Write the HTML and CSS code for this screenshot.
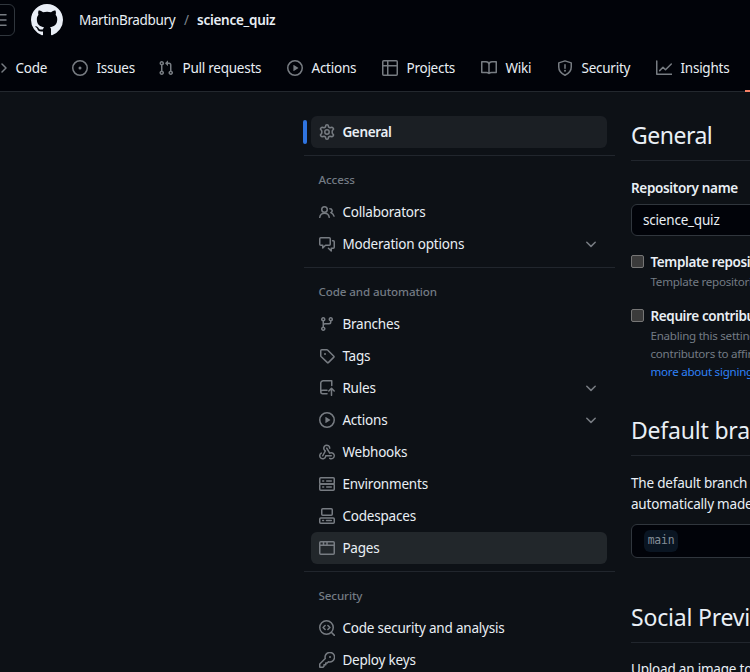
FILE: index.html
```html
<!DOCTYPE html>
<html lang="en">
<head>
<meta charset="utf-8">
<title>Settings · MartinBradbury/science_quiz</title>
<link rel="stylesheet" href="styles.css">
</head>
<body>
<svg class="sprite" aria-hidden="true">
  <symbol id="chevron" viewBox="0 0 16 16"><path class="line" d="M3.8 6.3 8 10.4l4.2-4.1"/></symbol>
  <symbol id="play" viewBox="0 0 16 16"><circle class="line" cx="8" cy="8" r="7.25"/><path d="M6.4 5.2v5.6c0 .2.2.3.4.2l4.4-2.8c.2-.1.2-.3 0-.4L6.8 5c-.2-.1-.4 0-.4.2Z"/></symbol>
</svg>
<header class="header">
  <div class="topbar">
    <div class="menu"><svg class="icon" viewBox="0 0 16 16"><path class="line" d="M1 2.75h14M1 8h14M1 13.25h14"/></svg></div>
    <svg class="logo" viewBox="0 0 16 16"><path d="M8 0c4.42 0 8 3.58 8 8a8.013 8.013 0 0 1-5.45 7.59c-.4.08-.55-.17-.55-.38 0-.27.01-1.13.01-2.2 0-.75-.25-1.23-.54-1.48 1.78-.2 3.65-.88 3.65-3.95 0-.88-.31-1.59-.82-2.15.08-.2.36-1.02-.08-2.12 0 0-.67-.22-2.2.82-.64-.18-1.32-.27-2-.27-.68 0-1.36.09-2 .27-1.53-1.03-2.2-.82-2.2-.82-.44 1.1-.16 1.92-.08 2.12-.51.56-.82 1.28-.82 2.15 0 3.06 1.86 3.75 3.64 3.95-.23.2-.44.55-.51 1.07-.46.21-1.61.55-2.33-.66-.15-.24-.6-.83-1.23-.82-.67.01-.27.38.01.53.34.19.73.9.82 1.13.16.45.68 1.31 2.69.94 0 .67.01 1.3.01 1.49 0 .21-.15.45-.55.38A7.995 7.995 0 0 1 0 8c0-4.42 3.58-8 8-8Z"/></svg>
    <span class="owner">MartinBradbury</span><span class="slash">/</span><span class="repo">science_quiz</span>
  </div>
  <nav class="tabs">
    <a class="tab"><svg class="icon" viewBox="0 0 16 16"><path class="line" d="M5 4 1 8l4 4M11 4l4 4-4 4"/></svg><span>Code</span></a>
    <a class="tab"><svg class="icon" viewBox="0 0 16 16"><circle class="line" cx="8" cy="8" r="7.25"/><circle cx="8" cy="8" r="1.5"/></svg><span>Issues</span></a>
    <a class="tab"><svg class="icon" viewBox="0 0 16 16"><path d="M1.5 3.25a2.25 2.25 0 1 1 3 2.122v5.256a2.251 2.251 0 1 1-1.5 0V5.372A2.25 2.25 0 0 1 1.5 3.25Zm5.677-.177L9.573.677A.25.25 0 0 1 10 .854V2.5h1A2.5 2.5 0 0 1 13.5 5v5.628a2.251 2.251 0 1 1-1.5 0V5a1 1 0 0 0-1-1h-1v1.646a.25.25 0 0 1-.427.177L7.177 3.427a.25.25 0 0 1 0-.354ZM3.75 2.5a.75.75 0 1 0 0 1.5.75.75 0 0 0 0-1.5Zm0 9.5a.75.75 0 1 0 0 1.5.75.75 0 0 0 0-1.5Zm8.25.75a.75.75 0 1 0 1.5 0 .75.75 0 0 0-1.5 0Z"/></svg><span>Pull requests</span></a>
    <a class="tab"><svg class="icon"><use href="#play"/></svg><span>Actions</span></a>
    <a class="tab"><svg class="icon" viewBox="0 0 16 16"><rect class="line" x=".75" y=".75" width="14.5" height="14.5" rx="1"/><path class="line" d="M5.75.75v14.5M.75 5.75h14.5"/></svg><span>Projects</span></a>
    <a class="tab"><svg class="icon" viewBox="0 0 16 16"><path class="line" d="M.75 1.75H5A3 3 0 0 1 8 4.5v9c-.7-.7-1.4-1-2.5-1H.75Zm14.5 0H11A3 3 0 0 0 8 4.5v9c.7-.7 1.4-1 2.5-1h4.75Z"/></svg><span>Wiki</span></a>
    <a class="tab"><svg class="icon" viewBox="0 0 16 16"><path class="line" d="M8 .9 14.25 2.9V7c0 3.6-2 6.4-6.25 8.2C3.75 13.4 1.75 10.6 1.75 7V2.9ZM8 4.7v3.6"/><circle cx="8" cy="10.7" r="1"/></svg><span>Security</span></a>
    <a class="tab"><svg class="icon" viewBox="0 0 16 16"><path class="line" d="M.75 1v13.25H16M3.7 10.6 7 7.3l2.5 2.5 5.8-5.8"/></svg><span>Insights</span></a>
    <a class="tab current"></a>
  </nav>
</header>
<div class="page">
  <aside class="sidebar">
    <a class="item selected"><svg class="icon" viewBox="0 0 16 16"><path class="line" d="M6.9 1.2Q8 .5 9.1 1.2L9.6 3 11 3.8l1.9-.5q1.2.3 1.7 1.7L13.2 6.9v2.2l1.4 1.9q-.4 1.3-1.7 1.7l-1.9-.5-1.4.8-.5 1.8q-1.1.7-2.2 0L6.4 13 5 12.2l-1.9.5Q1.8 12.3 1.4 11l1.4-1.9V6.9L1.4 5q.5-1.4 1.7-1.7l1.9.5L6.4 3Z"/><circle class="line" cx="8" cy="8" r="2.2"/></svg><span>General</span></a>
    <hr>
    <h3>Access</h3>
    <a class="item"><svg class="icon" viewBox="0 0 16 16"><circle class="line" cx="5.5" cy="5.5" r="2.75"/><path class="line" d="M.75 13.3a4.8 4.8 0 0 1 9.5 0M10.9 4.7c2.6 0 3 3.2.9 3.9 1.6.6 2.7 1.7 3.2 3.5"/></svg><span>Collaborators</span></a>
    <a class="item"><svg class="icon" viewBox="0 0 16 16"><path class="line" d="M1.75 1.75h8.5q1 0 1 1v5.5q0 1-1 1H6.5L3.75 12V9.25h-2q-1 0-1-1v-5.5q0-1 1-1ZM13.5 4.75h.75q1 0 1 1v5.5q0 1-1 1h-2v2.75L9.4 12.25"/></svg><span>Moderation options</span><svg class="icon arrow"><use href="#chevron"/></svg></a>
    <hr>
    <h3>Code and automation</h3>
    <a class="item"><svg class="icon" viewBox="0 0 16 16"><path d="M9.5 3.25a2.25 2.25 0 1 1 3 2.122V6A2.5 2.5 0 0 1 10 8.5H6a1 1 0 0 0-1 1v1.128a2.251 2.251 0 1 1-1.5 0V5.372a2.25 2.25 0 1 1 1.5 0v1.836A2.493 2.493 0 0 1 6 7h4a1 1 0 0 0 1-1v-.628A2.25 2.25 0 0 1 9.5 3.25Zm-6 0a.75.75 0 1 0 1.5 0 .75.75 0 0 0-1.5 0Zm8.25-.75a.75.75 0 1 0 0 1.5.75.75 0 0 0 0-1.5ZM4.25 12a.75.75 0 1 0 0 1.5.75.75 0 0 0 0-1.5Z"/></svg><span>Branches</span></a>
    <a class="item"><svg class="icon" viewBox="0 0 16 16"><path class="line" d="M2.75 1.75h5.1q.4 0 .7.3l6.3 6.2q.4.5 0 .9l-5.5 5.5q-.5.4-.9 0L2.05 8.55q-.3-.3-.3-.7v-5.1q0-1 1-1Z"/><circle cx="6" cy="6" r="1"/></svg><span>Tags</span></a>
    <a class="item"><svg class="icon" viewBox="0 0 16 16"><path class="line" d="M12.75 5.5V.75h-8.5a2.5 2.5 0 0 0-2.5 2.5v8.5a2 2 0 0 0 2 2H8M1.75 11.5q.3-1.25 2-1.25H8M12.5 15.3V8.6M9.8 11l2.7-2.7 2.7 2.7"/></svg><span>Rules</span><svg class="icon arrow"><use href="#chevron"/></svg></a>
    <a class="item"><svg class="icon"><use href="#play"/></svg><span>Actions</span><svg class="icon arrow"><use href="#chevron"/></svg></a>
    <a class="item"><svg class="icon" viewBox="0 0 16 16"><path d="M5.5 4.25a2.25 2.25 0 0 1 4.5 0 .75.75 0 0 0 1.5 0 3.75 3.75 0 1 0-6.14 2.889l-2.272 4.258a.75.75 0 0 0 1.324.706L7 7.25a.75.75 0 0 0-.309-1.015A2.25 2.25 0 0 1 5.5 4.25Z"/><path d="M7.364 3.607a.75.75 0 0 1 1.03.257l2.608 4.349a3.75 3.75 0 1 1-.628 6.785.75.75 0 0 1 .752-1.299 2.25 2.25 0 1 0-.033-3.88.75.75 0 0 1-1.03-.256L7.107 4.636a.75.75 0 0 1 .257-1.03Z"/><path d="M2.9 8.776A.75.75 0 0 1 2.625 9.8 2.25 2.25 0 1 0 6 11.75a.75.75 0 0 1 .75-.751h5.5a.75.75 0 0 1 0 1.5H7.425a3.751 3.751 0 1 1-5.55-3.998.75.75 0 0 1 1.024.274Z"/></svg><span>Webhooks</span></a>
    <a class="item"><svg class="icon" viewBox="0 0 16 16"><rect class="line" x=".75" y="1.75" width="14.5" height="6.25" rx="1"/><rect class="line" x=".75" y="8" width="14.5" height="6.25" rx="1"/><path class="line" d="M3.7 5h1M7.7 5h4.6M3.7 11h1M7.7 11h4.6"/></svg><span>Environments</span></a>
    <a class="item"><svg class="icon" viewBox="0 0 16 16"><rect class="line" x="2.75" y=".75" width="10.5" height="6.5" rx="1"/><rect class="line" x=".75" y="10" width="14.5" height="5.25" rx="1"/><path class="line" d="M3.7 12.6h.8M7.5 12.6h4.8"/></svg><span>Codespaces</span></a>
    <a class="item hovered"><svg class="icon" viewBox="0 0 16 16"><rect class="line" x=".75" y="1.75" width="14.5" height="12.5" rx="1"/><path class="line" d="M.75 5.25h14.5M4.5 2v3M8 2v3"/></svg><span>Pages</span></a>
    <hr>
    <h3>Security</h3>
    <a class="item"><svg class="icon" viewBox="0 0 16 16"><circle class="line" cx="7.5" cy="7.5" r="6.75"/><path class="line" d="m12.3 12.3 3.1 3.1M6.1 5.5 4.1 7.5l2 2M8.9 5.5l2 2-2 2"/></svg><span>Code security and analysis</span></a>
    <a class="item"><svg class="icon" viewBox="0 0 16 16"><path class="line" d="M6.25 6.5A4.75 4.75 0 1 1 9.5 9.75L8.2 11H6.75v1.75H5v1.5l-1 1H1q-.25 0-.25-.25v-3Z"/><circle cx="11" cy="5" r="1"/></svg><span>Deploy keys</span></a>
  </aside>
  <main class="content">
    <h2 class="h-general">General</h2>
    <label class="field-name">Repository name</label>
    <div class="input">science_quiz</div>
    <div class="check template"><i class="box"></i><div><b>Template repository</b><p>Template repositories let users generate new repositories</p></div></div>
    <div class="check signoff"><i class="box"></i><div><b>Require contributors to sign off on web-based commits</b><p>Enabling this setting will require<br>contributors to affirm their commits<br><a>more about signing off on commits</a></p></div></div>
    <h2 class="h-branch">Default branch</h2>
    <p class="copy">The default branch is considered<br>automatically made against</p>
    <div class="branch-box"><code>main</code></div>
    <h2 class="h-social">Social Preview</h2>
    <p class="copy upload">Upload an image to customize</p>
  </main>
</div>
</body>
</html>
```

FILE: styles.css
```css
* { box-sizing: border-box; }
html, body { margin: 0; height: 672px; overflow: hidden; }
body {
  background: #0d1116;
  color: #e9eff5;
  font: 13.5px/20px "Noto Sans", "Open Sans", sans-serif;
  letter-spacing: -0.2px;
  white-space: nowrap;
}
.sprite { display: none; }
.icon { width: 16px; height: 16px; flex: none; fill: currentColor; color: #777c82; }
.line { fill: none; stroke: currentColor; stroke-width: 1.5; stroke-linecap: round; stroke-linejoin: round; }

.header { height: 92px; background: #010309; border-bottom: 1px solid #23282e; }
.topbar { display: flex; align-items: center; height: 40px; }
.menu { width: 32px; height: 32px; margin-left: -17px; padding: 7px; border: 1px solid #30363d; border-radius: 6px; }
.logo { width: 32px; height: 32px; margin: 0 16px; fill: #e9eef6; }
.owner { width: 105px; letter-spacing: -0.35px; }
.slash { width: 13px; color: #7d8590; }
.repo { font-weight: 600; letter-spacing: -0.27px; }
.tabs {
  display: grid;
  grid-template-columns: 81px 86px 129px 95px 99px 76px 99px 97px 90px;
  height: 52px;
  margin: 0 0 0 -9px;
  padding-top: 3px;
}
.tab { display: flex; align-items: center; gap: 8.5px; height: 52px; padding-bottom: 3px; letter-spacing: -0.25px; }
.current { height: 49px; margin-left: -8px; border-bottom: 2px solid #f78166; }

.page { display: flex; height: 580px; padding-left: 304px; overflow: hidden; }
.sidebar { width: 311px; flex: none; padding-top: 24px; }
.item { display: flex; align-items: center; gap: 7.4px; position: relative; width: 296px; height: 32px; margin-left: 7px; padding: 0 8px; border-radius: 6px; }
.arrow { margin-left: auto; }
.selected { background: #1b1f24; font-weight: 600; letter-spacing: -0.35px; }
.selected::before { content: ""; position: absolute; left: -8px; top: 4px; width: 4px; height: 24px; border-radius: 6px; background: #2f74e0; }
.hovered { background: #22272b; }
.sidebar hr { height: 1px; margin: 7px 0 8px; border: 0; background: #21262d; }
.sidebar h3 { height: 32px; margin: 0 0 0 14.5px; color: #737b84; font-size: 11.6px; font-weight: 500; line-height: 32px; letter-spacing: -0.1px; }

.content { width: 500px; margin-left: 16px; flex: none; }
h2 { height: 45px; margin: 24px 0 0; border-bottom: 1px solid #21262d; font-size: 23px; font-weight: 400; line-height: 38px; letter-spacing: -0.2px; }
.h-general { letter-spacing: -0.5px; }
.field-name { display: block; margin-top: 17px; font-weight: 600; letter-spacing: -0.33px; }
.input { height: 32px; margin-top: 6px; padding: 0 11px; border: 1px solid #30363d; border-radius: 6px; background: #010309; line-height: 31px; }
.check { display: flex; gap: 6.5px; }
.check b { display: block; height: 20px; font-weight: 600; letter-spacing: -0.38px; }
.check p { margin: 1px 0 0; color: #737b84; font-size: 11.6px; line-height: 18px; letter-spacing: -0.26px; }
.check a { color: #2f81f7; }
.template { margin-top: 16px; }
.signoff { margin-top: 15px; }
.box { width: 13px; height: 13px; margin-top: 3px; border: 1px solid #767676; border-radius: 2px; background: #3b3b3b; }
.h-branch { margin-top: 30px; }
.copy { margin: 17px 0 0; line-height: 21px; }
.branch-box { height: 34px; margin-top: 9px; padding: 5px 12px; border: 1px solid #30363d; border-radius: 6px; background: #010309; }
code { display: block; width: 34px; height: 22px; border-radius: 6px; background: #0a1522; color: #848d97; font: 11.4px/21px "DejaVu Sans Mono", monospace; letter-spacing: -0.2px; text-align: center; }
.h-social { margin-top: 40px; }
.upload { margin-top: 16px; }
```
